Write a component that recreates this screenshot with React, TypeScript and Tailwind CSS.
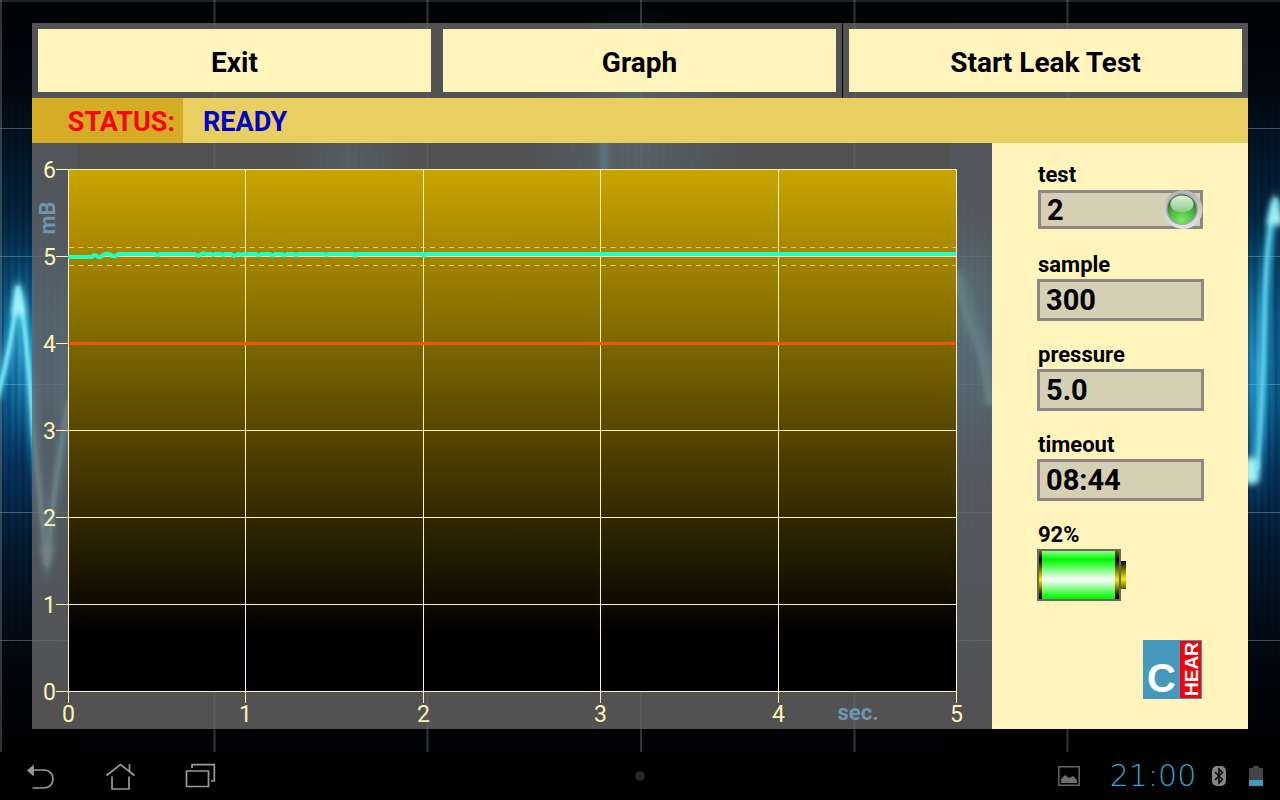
import { useId, useState } from "react";

interface FieldProps {
  label: string;
  initial: string;
  led?: boolean;
}

const TRACE =
  "M36 114H60q2-3 5-1q2 3 5 0q3-3 7-2q5 4 8 1q2-2 5-1h33q2 3 5 0h35q3 3 5 1q3-3 6-1h5q2 2 4 0h6q2 3 4 0h6q3 3 5 1q3-2 5 0q3-2 6-1h9q2 3 5 0h9q2 3 5 0h7q2 3 5 0h7q2 3 4 0h26q2 3 4 0h25q2 4 4 0h65q2 4 4 0H924";

const COLUMNS = [0, 1, 2, 3, 4, 5];
const ROWS = [0, 1, 2, 3, 4, 5, 6];

const columnX = (n: number) => Math.floor(36 + n * 177.6) + 0.5;
const rowY = (n: number) => 548.5 - n * 87;

function Wallpaper() {
  return (
    <svg
      aria-hidden="true"
      viewBox="0 0 1280 752"
      preserveAspectRatio="none"
      className="absolute inset-0 h-full w-full"
    >
      <defs>
        <linearGradient id="edge" x1="0" y1="0" x2="0" y2="1">
          <stop offset="0" stopColor="#000103" />
          <stop offset="0.12" stopColor="#010810" />
          <stop offset="0.28" stopColor="#04243f" />
          <stop offset="0.42" stopColor="#075783" />
          <stop offset="0.52" stopColor="#08598c" />
          <stop offset="0.62" stopColor="#06345f" />
          <stop offset="0.74" stopColor="#04182c" />
          <stop offset="0.9" stopColor="#01050a" />
          <stop offset="1" stopColor="#000" />
        </linearGradient>
        <radialGradient id="glow">
          <stop offset="0" stopColor="#2fa6d6" stopOpacity="0.9" />
          <stop offset="1" stopColor="#0a5a90" stopOpacity="0" />
        </radialGradient>
        <pattern id="streaks" width="14" height="8" patternUnits="userSpaceOnUse">
          <path d="M2 0V8M9 0V8" stroke="#000" strokeWidth="3" strokeOpacity="0.16" />
        </pattern>
        <filter id="soft" x="-50%" y="-20%" width="200%" height="140%">
          <feGaussianBlur stdDeviation="3" />
        </filter>
        <filter id="fine" x="-50%" y="-20%" width="200%" height="140%">
          <feGaussianBlur stdDeviation="1" />
        </filter>
      </defs>
      <rect width="1280" height="752" fill="#000103" />
      <rect width="78" height="752" fill="url(#edge)" />
      <rect x="950" y="0" width="330" height="752" fill="url(#edge)" />
      <ellipse cx="635" cy="130" rx="120" ry="125" fill="url(#glow)" opacity="0.7" />
      <ellipse cx="350" cy="160" rx="70" ry="60" fill="url(#glow)" opacity="0.5" />
      <ellipse cx="22" cy="350" rx="28" ry="110" fill="url(#glow)" />
      <ellipse cx="70" cy="370" rx="28" ry="110" fill="url(#glow)" opacity="0.7" />
      <ellipse cx="965" cy="320" rx="50" ry="120" fill="url(#glow)" />
      <ellipse cx="1256" cy="370" rx="26" ry="150" fill="url(#glow)" />
      <rect width="1280" height="752" fill="url(#streaks)" />
      <path
        d="M0 1H1280M0 128.5H1280M0 256.5H1280M0 384.5H1280M0 512.5H1280M0 640.5H1280"
        stroke="#9fb6c8"
        strokeOpacity="0.4"
      />
      <path
        d="M1 0V752M214.500 0V752M427.500 0V752M641 0V752M854.500 0V752M1067.500 0V752"
        stroke="#8c949c"
        strokeWidth="2"
        strokeOpacity="0.35"
      />
      <g fill="none" strokeLinejoin="round">
        <g stroke="#3cc0e6" strokeWidth="8" filter="url(#soft)">
          <path d="M-4 400Q12 350 18 290Q28 330 34 430Q40 500 47 560Q54 480 70 400" />
          <path d="M956 270Q968 320 978 335Q988 360 991 405" strokeWidth="14" />
          <path d="M1254 480Q1262 420 1264 320Q1268 230 1276 200" />
          <path d="M604 135V180" />
        </g>
        <g stroke="#8fecf5" strokeWidth="4" strokeOpacity="0.75" filter="url(#fine)">
          <path d="M-2 395Q12 345 18 288Q27 330 33 430Q40 500 47 565Q54 480 69 400" />
          <path d="M958 275Q964 315 974 335Q984 355 990 405" strokeWidth="7" strokeOpacity="0.5" />
          <path d="M1258 470Q1263 400 1265 290Q1268 225 1276 198" strokeOpacity="0.4" />
        </g>
      </g>
      <g fill="#a5f4f8" filter="url(#soft)">
        <path d="M18 278L25 315H12Z" />
        <path d="M47 580L41 545H53Z" />
        <path d="M1275 192L1284 225H1267Z" />
        <rect x="1244" y="458" width="14" height="26" rx="4" />
      </g>
    </svg>
  );
}

function Chart() {
  return (
    <svg
      role="img"
      aria-label="Pressure in mB over time in seconds"
      viewBox="0 0 960 586"
      className="block h-auto w-full bg-[#666668]/80 font-['Roboto',sans-serif]"
    >
      <defs>
        <linearGradient id="plot" x1="0" y1="0" x2="0" y2="1">
          <stop offset="0" stopColor="#caa500" />
          <stop offset="0.5" stopColor="#574700" />
          <stop offset="0.89" stopColor="#000" />
        </linearGradient>
      </defs>
      <rect x="36" y="26" width="889" height="523" fill="url(#plot)" />
      <g stroke="#fff3b4" shapeRendering="crispEdges">
        {ROWS.map((n) => (
          <line key={n} x1="24" x2="925" y1={rowY(n)} y2={rowY(n)} />
        ))}
        {COLUMNS.map((n) => (
          <line key={n} y1="26" y2="560" x1={columnX(n)} x2={columnX(n)} />
        ))}
      </g>
      <path d="M37 104.500H924M37 122.500H924" stroke="#e6cb5c" strokeDasharray="5 4.5" />
      <path d="M37 200.500H924" stroke="#f25400" strokeWidth="3" />
      <path d={TRACE} fill="none" stroke="#1fffc4" strokeWidth="4" />
      <g fill="#fff3b4" fontSize="23">
        {ROWS.map((n) => (
          <text key={n} x="24" y={rowY(n) + 8} textAnchor="end">
            {n}
          </text>
        ))}
        {COLUMNS.map((n) => (
          <text key={n} x={columnX(n)} y="579" textAnchor="middle">
            {n}
          </text>
        ))}
      </g>
      <g fill="#6c97ad" fontSize="22" fontWeight="700">
        <text x="826" y="577" textAnchor="middle">sec.</text>
        <text transform="translate(23 75) rotate(-90)" textAnchor="middle">mB</text>
      </g>
    </svg>
  );
}

function Led() {
  return (
    <svg aria-hidden="true" viewBox="0 0 40 40" className="absolute right-px top-0 h-10 w-10">
      <defs>
        <linearGradient id="led-ring" x1="0" y1="0" x2="0" y2="1">
          <stop offset="0" stopColor="#b4b2b4" />
          <stop offset="1" stopColor="#e6e3e8" />
        </linearGradient>
        <radialGradient id="led-body" cx="0.5" cy="0.9" r="0.8">
          <stop offset="0" stopColor="#78f060" />
          <stop offset="0.5" stopColor="#50bd42" />
          <stop offset="1" stopColor="#2d6e2b" />
        </radialGradient>
        <linearGradient id="led-shine" x1="0" y1="0" x2="0" y2="1">
          <stop offset="0" stopColor="#dcefd9" />
          <stop offset="1" stopColor="#8cc985" />
        </linearGradient>
      </defs>
      <circle cx="20" cy="20.500" r="19.500" fill="url(#led-ring)" />
      <circle cx="19" cy="20" r="16" fill="#a7a5a8" />
      <circle cx="19" cy="20" r="14.500" fill="url(#led-body)" />
      <ellipse cx="19" cy="15" rx="11.500" ry="8.500" fill="url(#led-shine)" />
    </svg>
  );
}

function Field({ label, initial, led }: FieldProps) {
  const id = useId();
  const [value, setValue] = useState(initial);

  return (
    <div className="mb-[18px]">
      <label htmlFor={id} className="ml-px block pt-0.5 text-[22px] font-bold leading-7">
        {label}
      </label>
      <div className={led ? "relative h-[42px] px-px pb-0.5 pt-px" : "h-[42px]"}>
        <input
          id={id}
          value={value}
          onChange={(e) => setValue(e.target.value)}
          className="block h-full w-full border-[3px] border-[#8d8787] bg-[#d5cfb3] px-1.5 text-[29px] font-bold leading-8 outline-none"
        />
        {led && <Led />}
      </div>
    </div>
  );
}

function Battery() {
  return (
    <svg role="img" aria-label="Battery level" viewBox="0 0 90 52" className="h-[52px] w-[90px]">
      <defs>
        <linearGradient id="brass" x1="0" y1="0" x2="0" y2="1">
          <stop offset="0" stopColor="#746a00" />
          <stop offset="0.18" stopColor="#000" />
          <stop offset="0.6" stopColor="#f4ee00" />
          <stop offset="0.95" stopColor="#000" />
        </linearGradient>
        <linearGradient id="tip" x1="0" y1="0" x2="0" y2="1">
          <stop offset="0" stopColor="#000" />
          <stop offset="0.65" stopColor="#f4ee00" />
          <stop offset="1" stopColor="#5c5500" />
        </linearGradient>
        <linearGradient id="charge" x1="0" y1="0" x2="0" y2="1">
          <stop offset="0" stopColor="#8cff8c" />
          <stop offset="0.18" stopColor="#00f800" />
          <stop offset="0.6" stopColor="#fff" />
          <stop offset="0.98" stopColor="#00f800" />
        </linearGradient>
      </defs>
      <rect x="84" y="12" width="5" height="28" fill="url(#tip)" />
      <rect width="84" height="52" fill="#6c6a5a" />
      <rect x="2" y="2" width="80" height="48" fill="url(#brass)" />
      <rect x="5" y="2" width="73" height="48" fill="url(#charge)" />
    </svg>
  );
}

function Logo() {
  return (
    <svg
      role="img"
      aria-label="C HEAR"
      viewBox="0 0 59 59"
      className="mt-auto h-[59px] w-[59px] self-end font-['Liberation_Sans',sans-serif]"
    >
      <rect width="59" height="59" fill="#4599bd" />
      <rect x="37" y="1" width="21" height="57" fill="#f5000c" />
      <text x="4" y="52" fontSize="40" fontWeight="700" fill="#fff">C</text>
      <text transform="translate(54.500 56) rotate(-90)" fontSize="19" fontWeight="700" fill="#fff">HEAR</text>
    </svg>
  );
}

function NavBar() {
  const navButton = "flex h-12 w-20 items-center justify-center";
  return (
    <nav className="grid h-12 grid-cols-[1fr_auto_1fr] items-center bg-black">
      <div className="flex">
        <button aria-label="Back" className={navButton}>
          <svg viewBox="0 0 32 32" className="h-8 w-8" fill="none" stroke="#999" strokeWidth="1.700">
            <path d="M9 10H20C25.500 10 29 14 29 19S25.500 28 20 28H8.500" />
            <path d="M3 10.500L9.800 4.500V16.500Z" fill="#999" stroke="none" />
          </svg>
        </button>
        <button aria-label="Home" className={navButton}>
          <svg viewBox="0 0 32 32" className="h-8 w-8" fill="none" stroke="#999" strokeWidth="1.700">
            <path d="M2.500 15.500L16.500 4.500L30.500 15.500M25.500 11V4M8 16.500V29H25V16.500" />
          </svg>
        </button>
        <button aria-label="Recent apps" className={navButton}>
          <svg viewBox="0 0 32 32" className="h-8 w-8" fill="none" stroke="#999" strokeWidth="1.700">
            <path d="M2.500 11H24.500V26.500H2.500ZM8 8V4.700H30.300V21H27" />
          </svg>
        </button>
      </div>
      <span className="h-2.5 w-2.5 rounded-full bg-[#262626]" />
      <div className="flex items-center justify-end pr-[17px]">
        <svg aria-hidden="true" viewBox="0 0 22 20" className="h-5 w-[22px]">
          <path d="M.8.8H21.200V19.200H.8Z" fill="none" stroke="#646464" strokeWidth="1.500" />
          <path d="M3 17V13L7 9L11 12L15 10L19 14V17Z" fill="#6e6e6e" />
        </svg>
        <time className="w-[132px] pl-3.5 text-center font-['DejaVu_Sans',sans-serif] text-[30px] font-extralight leading-8 text-[#33a5cc]">
          21:00
        </time>
        <svg aria-hidden="true" viewBox="0 0 14 20" className="h-5 w-3.5">
          <rect width="14" height="20" rx="5" fill="#858585" />
          <path d="M3 6L10.500 13.500L7 17V3L10.500 6.500L3 14" fill="none" stroke="#000" strokeWidth="1.500" />
        </svg>
        <svg aria-hidden="true" viewBox="0 0 14 20" className="ml-[23px] h-5 w-3.5">
          <path d="M0 2H4V0H10V2H14V14H0Z" fill="#444" />
          <rect y="14" width="14" height="6" fill="#3a9dc4" />
        </svg>
      </div>
    </nav>
  );
}

export default function App() {
  const [status] = useState("READY");
  const cell = "flex-1 bg-[#666668]/80 p-1.5";
  const button = "h-[63px] w-full bg-[#fff4bb] pt-1 text-[28px] font-bold leading-8 hover:bg-[#fff8d2]";

  return (
    <div className="flex min-h-screen flex-col bg-black font-['Roboto',sans-serif] text-black">
      <div className="relative flex-1">
        <Wallpaper />
        <main className="relative px-8 pb-[23px] pt-[23px]">
          <div className="flex">
            <div className={cell}>
              <button className={button}>Exit</button>
            </div>
            <div className={cell}>
              <button className={button}>Graph</button>
            </div>
            <div className={`${cell} border-l border-black`}>
              <button className={button}>Start Leak Test</button>
            </div>
          </div>

          <div className="flex h-[45px] items-center bg-[#e8cf5f] text-[27px] font-bold leading-8">
            <span className="flex h-full w-[151px] items-center justify-end bg-[#d4ad25] pr-2 pt-0.5 text-[#ff0000]">
              STATUS:
            </span>
            <span role="status" className="pl-5 pt-0.5 text-[#0000c8]">
              {status}
            </span>
          </div>

          <div className="flex">
            <div className="min-w-0 flex-1">
              <Chart />
            </div>
            <aside className="flex w-64 flex-col bg-[#fff4bb] pb-[30px] pl-[45px] pr-[46px] pt-4">
              <div className="w-[167px]">
                <Field label="test" initial="2" led />
                <Field label="sample" initial="300" />
                <Field label="pressure" initial="5.0" />
                <Field label="timeout" initial="08:44" />
              </div>
              <p className="ml-px pt-0.5 text-[22px] font-bold leading-7">92%</p>
              <Battery />
              <Logo />
            </aside>
          </div>
        </main>
      </div>
      <NavBar />
    </div>
  );
}
